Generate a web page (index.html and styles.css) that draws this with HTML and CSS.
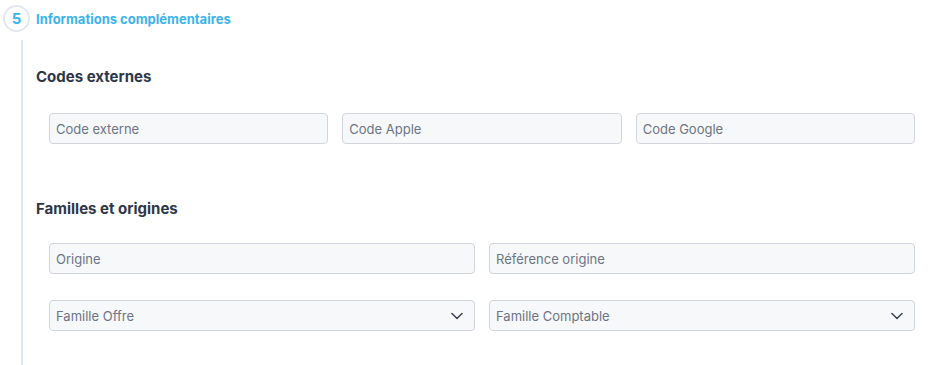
FILE: index.html
```html
<!DOCTYPE html>
<html lang="fr">
<head>
    <meta charset="UTF-8">
    <meta name="viewport" content="width=device-width, initial-scale=1.0">
    <title>Informations complémentaires</title>
    <link rel="stylesheet" href="styles.css">
</head>
<body>
    <div class="step">
        <div class="step-header">
            <span class="step-number">5</span>
            <span class="step-title">Informations complémentaires</span>
        </div>

        <div class="step-body">
            <h2>Codes externes</h2>
            <div class="fields cols-3">
                <input class="field" type="text" placeholder="Code externe">
                <input class="field" type="text" placeholder="Code Apple">
                <input class="field" type="text" placeholder="Code Google">
            </div>

            <h2 class="second">Familles et origines</h2>
            <div class="fields cols-2">
                <input class="field" type="text" placeholder="Origine">
                <input class="field" type="text" placeholder="Référence origine">
                <div class="select">
                    <span>Famille Offre</span>
                    <svg width="12" height="8" viewBox="0 0 12 8"><path d="M1 1.5l5 5 5-5" fill="none" stroke="#3a4250" stroke-width="1.5" stroke-linecap="round" stroke-linejoin="round"/></svg>
                </div>
                <div class="select">
                    <span>Famille Comptable</span>
                    <svg width="12" height="8" viewBox="0 0 12 8"><path d="M1 1.5l5 5 5-5" fill="none" stroke="#3a4250" stroke-width="1.5" stroke-linecap="round" stroke-linejoin="round"/></svg>
                </div>
            </div>
        </div>
    </div>
</body>
</html>
```

FILE: styles.css
```css
body {
    margin: 0;
    font-family: Inter, "Open Sans", sans-serif;
    background: white;
    color: #2d3748;
}

.step {
    height: 365px;
    display: flex;
    flex-direction: column;
}

.step-header {
    display: flex;
    align-items: center;
    gap: 6px;
    padding: 5px 0 0 3px;
}

.step-number {
    width: 23px;
    height: 23px;
    border: 2px solid #e1e7f0;
    border-radius: 50%;
    display: flex;
    align-items: center;
    justify-content: center;
    color: #3bb4ec;
    font-weight: 700;
    font-size: 15px;
}

.step-title {
    color: #3bb4ec;
    font-weight: 700;
    font-size: 13px;
    padding-top: 1px;
}

.step-body {
    flex: 1;
    margin: 8px 0 0 21px;
    border-left: 2px solid #e2e8f0;
    padding: 27px 27px 0 13px;
}

h2 {
    margin: 0 0 26px;
    font-size: 15px;
    line-height: 20px;
    font-weight: 700;
    color: #2d3748;
}

h2.second {
    margin-top: 55px;
    margin-bottom: 24px;
}

.fields {
    display: grid;
    gap: 26px 14px;
    padding-left: 13px;
}

.cols-3 {
    grid-template-columns: repeat(3, 1fr);
}

.cols-2 {
    grid-template-columns: repeat(2, 1fr);
}

.field,
.select {
    box-sizing: border-box;
    height: 31px;
    width: 100%;
    background: #f7f8fa;
    border: 1px solid #d2d6dc;
    border-radius: 4px;
    padding: 0 6px;
    font-family: inherit;
    font-size: 13px;
    color: #2d3748;
}

.field::placeholder {
    color: #6b7585;
}

.select {
    display: flex;
    align-items: center;
    justify-content: space-between;
    color: #6b7585;
    padding-right: 11px;
}
```
